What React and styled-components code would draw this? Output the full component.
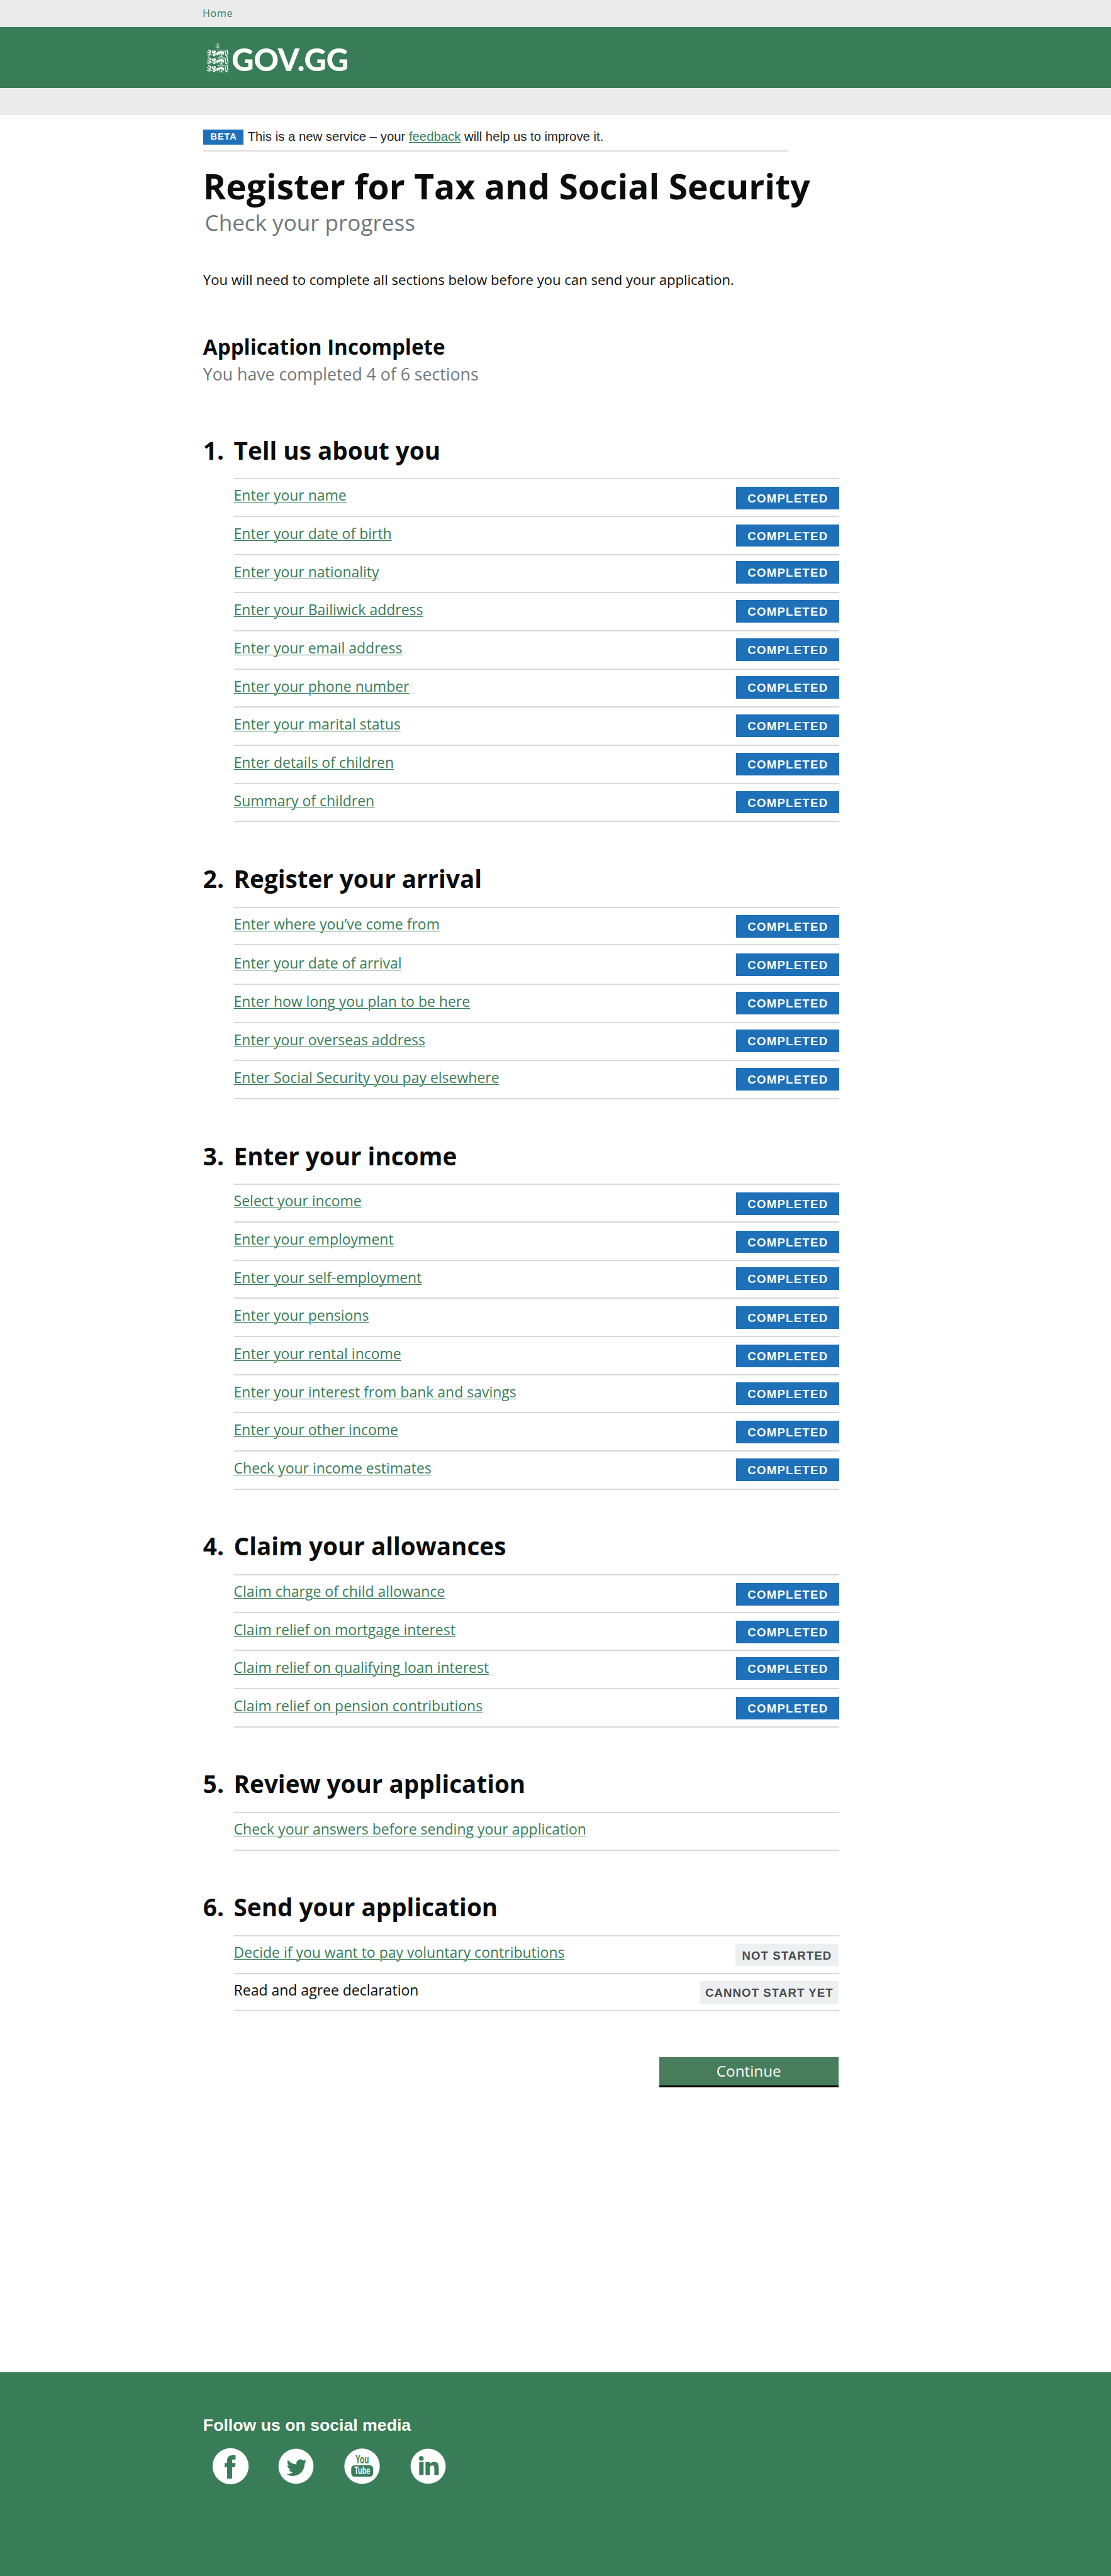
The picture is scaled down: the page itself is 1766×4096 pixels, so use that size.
import React from 'react';
import styled, { createGlobalStyle } from 'styled-components';

const green = '#387d57';
const blue = '#1e70b8';
const ink = '#0b0c0c';
const grey = '#6f777b';
const line = '#d8d8d8';

const GlobalStyle = createGlobalStyle`
  *, *::before, *::after { box-sizing: border-box; }
  html { font-size: 9.198px; }
  body {
    margin: 0;
    background: #fff;
    color: ${ink};
    font-family: 'Open Sans', 'Noto Sans', sans-serif;
  }
  h1, h2, h3, p, ul, ol { margin: 0; padding: 0; font-weight: inherit; }
  ul, ol { list-style: none; }
`;

const Page = styled.div`
  display: flex;
  flex-direction: column;
  min-height: 4096px;
`;

const Breadcrumb = styled.nav`
  height: 4.7rem;
  padding-left: 35rem;
  background: #ebebeb;
`;

const HomeLink = styled.a`
  display: block;
  font-size: 1.75rem;
  line-height: 4.75rem;
  letter-spacing: 0.08rem;
  color: ${green};
`;

const Masthead = styled.header`
  display: flex;
  height: 10.5rem;
  padding-left: 35.7rem;
  background: ${green};
`;

const CrestIcon = styled.svg`
  width: 3.93rem;
  height: 5.1rem;
  margin-top: 2.7rem;
  fill: #fff;
  stroke: #fff;
  overflow: visible;
`;

const Wordmark = styled.span`
  margin: 0.3rem 0 0 0.4rem;
  font-family: Lato, sans-serif;
  font-weight: 900;
  font-size: 5.3rem;
  line-height: 10.5rem;
  color: #fff;
`;

const SubBar = styled.div`
  height: 4.7rem;
  background: #ebebeb;
`;

const Main = styled.main`
  display: flex;
  flex-direction: column;
  width: 145rem;
  padding: 2.5rem 0 0 35.1rem;
`;

const PhaseBanner = styled.div`
  display: flex;
  align-items: flex-start;
  width: 101.1rem;
  height: 3.8rem;
  border-bottom: 2px solid #ddd;
  font-family: 'Liberation Sans', Arial, sans-serif;
`;

const PhaseTag = styled.strong`
  width: 7rem;
  height: 2.6rem;
  padding-left: 0.08rem;
  background: ${blue};
  color: #fff;
  font-size: 1.62rem;
  line-height: 2.6rem;
  letter-spacing: 0.08rem;
  text-align: center;
`;

const PhaseText = styled.p`
  margin-left: 0.7rem;
  font-size: 2.21rem;
  line-height: 2.55rem;
  white-space: nowrap;
  color: #222;
`;

const Link = styled.a`
  color: ${green};
  text-decoration: underline;
  text-decoration-thickness: 1px;
  text-underline-offset: 2px;
`;

const Title = styled.h1`
  margin-top: 2.38rem;
  font-size: 6rem;
  font-weight: 700;
  line-height: 7.2rem;
  white-space: nowrap;
`;

const Subtitle = styled.p`
  margin: 0.35rem 0 0 0.3rem;
  font-size: 3.81rem;
  line-height: 4.8rem;
  color: ${grey};
`;

const Intro = styled.p`
  margin-top: 5.84rem;
  font-size: 2.4rem;
  line-height: 3.2rem;
`;

const StatusHeading = styled.h2`
  margin-top: 7.88rem;
  font-size: 3.6rem;
  font-weight: 700;
  line-height: 4.4rem;
`;

const StatusText = styled.p`
  margin: 0.58rem 0 8.87rem;
  font-size: 2.9rem;
  line-height: 3.6rem;
  color: ${grey};
`;

const Section = styled.section`
  margin-bottom: calc(7.46rem - 2px);
`;

const SectionHeading = styled.h2`
  display: grid;
  grid-template-columns: 5.3rem 1fr;
  height: 7.34rem;
  font-size: 4.2rem;
  font-weight: 700;
  line-height: 5.06rem;
`;

const TaskList = styled.ul`
  margin-left: 5.3rem;
  width: 104.6rem;
  border-bottom: 2px solid ${line};
`;

const Task = styled.li`
  display: flex;
  justify-content: space-between;
  align-items: flex-start;
  height: ${(p) => p.$height}rem;
  border-top: 2px solid ${line};
`;

const TaskName = styled.span`
  margin-top: ${(p) => p.$top}rem;
  font-size: 2.5rem;
  line-height: 3.4rem;
`;

const Tag = styled.strong`
  width: ${(p) => (p.$wide ? 23.9 : 17.8)}rem;
  height: 3.9rem;
  margin-top: ${(p) => p.$top}rem;
  padding-left: ${(p) => (p.$muted ? 0 : 0.1)}rem;
  margin-right: ${(p) => (p.$muted ? 0.1 : 0)}rem;
  background: ${(p) => (p.$muted ? '#eeeff1' : blue)};
  color: ${(p) => (p.$muted ? '#454b50' : '#fff')};
  font-family: 'Liberation Sans', Arial, sans-serif;
  font-size: 2.02rem;
  line-height: 4.1rem;
  letter-spacing: ${(p) => (p.$muted ? 0.12 : 0.14)}rem;
  text-align: center;
  white-space: nowrap;
`;

const ContinueButton = styled.button`
  align-self: flex-end;
  width: 31rem;
  height: 5.2rem;
  margin: 0.64rem 0.1rem 0 0;
  padding: 0 0 0.1rem;
  border: 0;
  border-bottom: 3px solid #000;
  border-radius: 0;
  background: #477d5a;
  color: #fff;
  font-family: inherit;
  font-size: 2.64rem;
  line-height: 4.7rem;
`;

const Footer = styled.footer`
  height: 35.2rem;
  margin-top: auto;
  padding: 7.4rem 0 0 35.1rem;
  background: ${green};
`;

const FooterHeading = styled.h3`
  font-family: 'Liberation Sans', Arial, sans-serif;
  font-size: 2.9rem;
  font-weight: 700;
  line-height: 3.6rem;
  color: #fff;
`;

const SocialList = styled.ul`
  display: flex;
  gap: 5.17rem;
  margin: 2.16rem 0 0 1.63rem;
`;

const SocialIcon = styled.svg`
  display: block;
  width: 6.2rem;
  height: 6.2rem;
  fill: ${green};
  overflow: visible;

  text {
    font-family: 'Liberation Sans Narrow', 'Liberation Sans', Arial, sans-serif;
    font-weight: 700;
  }
`;

const Disc = styled.circle`
  fill: #fff;
`;

const LightText = styled.text`
  fill: #fff;
`;

const done = 'COMPLETED';
const first = { height: 6.5, nameTop: 1.1 };

const sections = [
  {
    title: 'Tell us about you',
    tasks: [
      { label: 'Enter your name', status: done, tagTop: 1.28, ...first },
      { label: 'Enter your date of birth', status: done, tagTop: 1.28 },
      { label: 'Enter your nationality', status: done, tagTop: 1.08 },
      { label: 'Enter your Bailiwick address', status: done },
      { label: 'Enter your email address', status: done },
      { label: 'Enter your phone number', status: done },
      { label: 'Enter your marital status', status: done },
      { label: 'Enter details of children', status: done },
      { label: 'Summary of children', status: done },
    ],
  },
  {
    title: 'Register your arrival',
    tasks: [
      { label: 'Enter where you’ve come from', status: done, tagTop: 1.28, ...first },
      { label: 'Enter your date of arrival', status: done, tagTop: 1.38, height: 6.8, nameTop: 1.4 },
      { label: 'Enter how long you plan to be here', status: done },
      { label: 'Enter your overseas address', status: done },
      { label: 'Enter Social Security you pay elsewhere', status: done },
    ],
  },
  {
    title: 'Enter your income',
    tasks: [
      { label: 'Select your income', status: done, tagTop: 1.28, ...first },
      { label: 'Enter your employment', status: done, tagTop: 1.38 },
      { label: 'Enter your self-employment', status: done },
      { label: 'Enter your pensions', status: done, tagTop: 1.28 },
      { label: 'Enter your rental income', status: done, tagTop: 1.28 },
      { label: 'Enter your interest from bank and savings', status: done, tagTop: 1.28 },
      { label: 'Enter your other income', status: done, tagTop: 1.28 },
      { label: 'Check your income estimates', status: done },
    ],
  },
  {
    title: 'Claim your allowances',
    tasks: [
      { label: 'Claim charge of child allowance', status: done, tagTop: 1.28, ...first },
      { label: 'Claim relief on mortgage interest', status: done, tagTop: 1.38 },
      { label: 'Claim relief on qualifying loan interest', status: done, tagTop: 1.08 },
      { label: 'Claim relief on pension contributions', status: done, tagTop: 1.28 },
    ],
  },
  {
    title: 'Review your application',
    tasks: [{ label: 'Check your answers before sending your application', ...first }],
  },
  {
    title: 'Send your application',
    tasks: [
      { label: 'Decide if you want to pay voluntary contributions', status: 'NOT STARTED', tagTop: 1.28, ...first },
      { label: 'Read and agree declaration', status: 'CANNOT START YET', tagTop: 1.28, locked: true, ...first },
    ],
  },
];

function Lion({ y }) {
  return (
    <g transform={`translate(0 ${y})`}>
      <g fill="none" strokeWidth="3.6">
        <path d="M8 1 L13 8 L24 12 M14 1 L22 7 M2 13 L14 17 L26 11 M1 28 L9 29 L14 22 L25 20 M6 35 L13 34 L18 27 L27 28" />
        <path d="M54 3 H112 M60 9 H108" strokeWidth="2.4" />
        <path d="M108 3 V16 L113 21 L106 26 V33 L112 37 M98 10 V28 L102 35 H108 M89 14 V24 L84 30 M78 16 L80 25 L76 34 L84 36 M69 18 L60 23 L72 26 M64 35 H76" strokeWidth="3.6" />
      </g>
      <path
        d="M29 5 L35 8 L40 4 L47 7 L49 13 L46 18 L48 28 L43 36 L34 34 L30 27 L33 20 L27 15 Z M52 15 L64 13 L78 10 L88 13 L92 20 L84 23 L70 21 L60 27 L55 32 L50 26 Z"
        strokeWidth="0"
      />
      <path d="M31 22 L46 18 M33 12 L45 14 M32 29 L46 27" stroke={green} strokeWidth="1.8" />
    </g>
  );
}

function Crest() {
  return (
    <CrestIcon viewBox="0 0 116 154" aria-hidden="true">
      <path
        d="M58 0 V32 M50 8 L58 16 L66 8 M45 17 L58 21 L71 17 M49 27 L58 22 L67 27 M54 4 L58 9 L62 4"
        fill="none"
        strokeWidth="2"
      />
      <Lion y={35} />
      <Lion y={76} />
      <Lion y={117} />
    </CrestIcon>
  );
}

function Facebook() {
  return (
    <SocialIcon viewBox="111.5 454 187 187" role="img" aria-label="Facebook">
      <Disc cx="205" cy="547.5" r="94" />
      <path d="M231 490 H214 C194 490 187 502 187 518 V530 H174 V552 H187 V612 H213 V552 H229 L231 530 H213 V519 C213 514 216 512 221 512 H231 Z" />
    </SocialIcon>
  );
}

function Twitter() {
  return (
    <SocialIcon viewBox="453.5 454.5 187 187" role="img" aria-label="Twitter">
      <Disc cx="547" cy="548" r="91.5" />
      <g transform="translate(498 501.5) scale(0.2045 0.209)">
        <path d="M459.37 151.716c.325 4.548.325 9.097.325 13.645 0 138.72-105.583 298.558-298.558 298.558-59.452 0-114.68-17.219-161.137-47.106 8.447.974 16.568 1.299 25.34 1.299 49.055 0 94.213-16.568 130.274-44.832-46.132-.975-84.792-31.188-98.112-72.772 6.498.974 12.995 1.624 19.818 1.624 9.421 0 18.843-1.3 27.614-3.573-48.081-9.747-84.143-51.98-84.143-102.985v-1.299c13.969 7.797 30.214 12.67 47.431 13.319-28.264-18.843-46.781-51.005-46.781-87.391 0-19.492 5.197-37.36 14.294-52.954 51.655 63.675 129.3 105.258 216.365 109.807-1.624-7.797-2.599-15.918-2.599-24.04 0-57.828 46.782-104.934 104.934-104.934 30.213 0 57.502 12.67 76.67 33.137 23.715-4.548 46.456-13.32 66.599-25.34-7.798 24.366-24.366 44.833-46.132 57.827 21.117-2.273 41.584-8.122 60.426-16.243-14.292 20.791-32.161 39.308-52.628 54.253z" />
      </g>
    </SocialIcon>
  );
}

function YouTube() {
  return (
    <SocialIcon viewBox="794 454.5 187 187" role="img" aria-label="YouTube">
      <Disc cx="887.5" cy="548" r="92.5" />
      <text x="853" y="533" fontSize="61" textLength="70" lengthAdjust="spacingAndGlyphs">You</text>
      <rect x="831" y="543" width="114" height="59" rx="17" />
      <LightText x="847" y="590" fontSize="55" textLength="83" lengthAdjust="spacingAndGlyphs">Tube</LightText>
    </SocialIcon>
  );
}

function LinkedIn() {
  return (
    <SocialIcon viewBox="1135 454.5 187 187" role="img" aria-label="LinkedIn">
      <Disc cx="1228.5" cy="548" r="91.5" />
      <circle cx="1193" cy="507" r="12.5" />
      <path d="M1182 527 H1205 V594 H1182 Z M1215 527 H1238 V536 C1243 529 1250 525 1260 525 C1278 525 1284 537 1284 555 V594 H1261 V560 C1261 550 1259 544 1250 544 C1241 544 1238 550 1238 560 V594 H1215 Z" />
    </SocialIcon>
  );
}

function TaskRow({ label, status, locked, tagTop = 1.18, height = 6.6, nameTop = 1.2 }) {
  return (
    <Task $height={height}>
      <TaskName $top={nameTop}>{locked ? label : <Link>{label}</Link>}</TaskName>
      {status && (
        <Tag $top={tagTop} $muted={status !== done} $wide={locked}>
          {status}
        </Tag>
      )}
    </Task>
  );
}

export default function App() {
  return (
    <Page>
      <GlobalStyle />
      <Breadcrumb>
        <HomeLink>Home</HomeLink>
      </Breadcrumb>
      <Masthead>
        <Crest />
        <Wordmark>GOV.GG</Wordmark>
      </Masthead>
      <SubBar />
      <Main>
        <PhaseBanner>
          <PhaseTag>BETA</PhaseTag>
          <PhaseText>
            This is a new service – your <Link>feedback</Link> will help us to improve it.
          </PhaseText>
        </PhaseBanner>
        <Title>Register for Tax and Social Security</Title>
        <Subtitle>Check your progress</Subtitle>
        <Intro>You will need to complete all sections below before you can send your application.</Intro>
        <StatusHeading>Application Incomplete</StatusHeading>
        <StatusText>You have completed 4 of 6 sections</StatusText>
        {sections.map((section, i) => (
          <Section key={section.title}>
            <SectionHeading>
              <span>{i + 1}.</span>
              <span>{section.title}</span>
            </SectionHeading>
            <TaskList>
              {section.tasks.map((task) => (
                <TaskRow key={task.label} {...task} />
              ))}
            </TaskList>
          </Section>
        ))}
        <ContinueButton>Continue</ContinueButton>
      </Main>
      <Footer>
        <FooterHeading>Follow us on social media</FooterHeading>
        <SocialList>
          <li><Facebook /></li>
          <li><Twitter /></li>
          <li><YouTube /></li>
          <li><LinkedIn /></li>
        </SocialList>
      </Footer>
    </Page>
  );
}
